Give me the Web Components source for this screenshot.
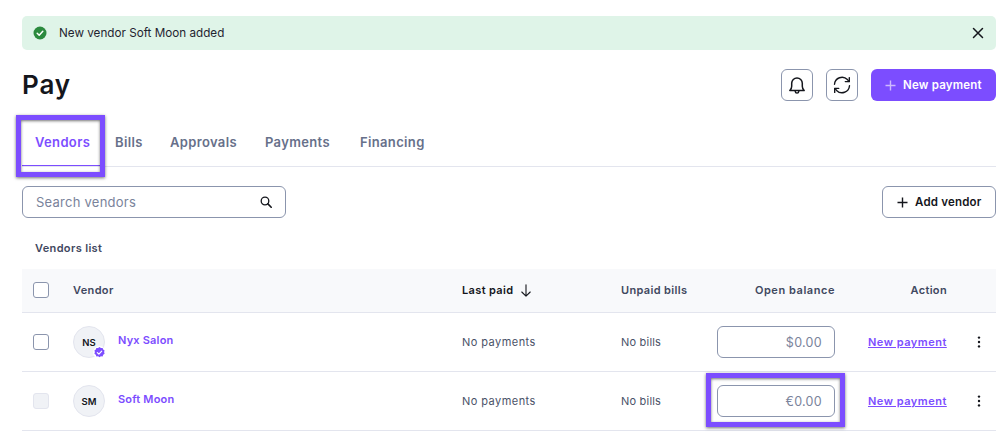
<!DOCTYPE html>
<html lang="en">
<head>
<meta charset="utf-8">
<title>Pay</title>
<style>
  html, body { margin: 0; padding: 0; background: #fff; overflow: hidden; }
  body { font-family: Inter, "Liberation Sans", sans-serif; color: #14161c; width: 996px; height: 432px; }
</style>
</head>
<body>
<pay-page></pay-page>
<script>
const ICONS = {
    check: `<svg width="14" height="14" viewBox="0 0 14 14"><circle cx="7" cy="7" r="6.5" fill="#2b8a3e"/><path d="M4.2 7.2l2 2 3.6-3.9" fill="none" stroke="#fff" stroke-width="1.5" stroke-linecap="round" stroke-linejoin="round"/></svg>`,
    close: `<svg width="12" height="12" viewBox="0 0 12 12"><path d="M1.5 1.5l9 9M10.5 1.5l-9 9" stroke="#14161c" stroke-width="1.5" stroke-linecap="round"/></svg>`,
    bell: `<svg width="18" height="20" viewBox="0 0 18 20" fill="none" stroke="#14161c" stroke-width="1.5" stroke-linejoin="round"><path d="M1.8 15.5c1.3-1.2 1.9-2.4 1.9-4.3V8.2a5.3 5.3 0 0 1 10.6 0v3c0 1.9.6 3.1 1.9 4.3z"/><path d="M7.2 16.2c.1 1.2.8 1.9 1.8 1.9s1.7-.7 1.8-1.9" stroke-linecap="round"/></svg>`,
    refresh: `<svg width="18" height="18" viewBox="0 0 18 18" fill="none" stroke="#14161c" stroke-width="1.4" stroke-linecap="round" stroke-linejoin="round"><path d="M1.5 8.2A7.5 7.5 0 0 1 14.4 3.6l1.6 1.8"/><path d="M16.3 1.6V5.6h-4"/><path d="M16.5 9.8A7.5 7.5 0 0 1 3.6 14.4L2 12.6"/><path d="M1.7 16.4v-4h4"/></svg>`,
    plus: `<svg width="11" height="11" viewBox="0 0 11 11"><path d="M5.5 .5v10M.5 5.5h10" stroke="currentColor" stroke-width="1.4"/></svg>`,
    search: `<svg width="12" height="12" viewBox="0 0 12 12" fill="none" stroke="#14161c" stroke-width="1.3"><circle cx="5" cy="5" r="3.8"/><path d="M7.9 7.9l3.3 3.3" stroke-linecap="round" stroke-width="1.6"/></svg>`,
    down: `<svg width="10" height="13" viewBox="0 0 10 13" fill="none" stroke="#14161c" stroke-width="1.1" stroke-linecap="round" stroke-linejoin="round"><path d="M5 .7v11.4M.8 8l4.2 4.2L9.2 8"/></svg>`,
    kebab: `<svg width="4" height="12" viewBox="0 0 4 12" fill="#14161c"><circle cx="2" cy="1.6" r="1.2"/><circle cx="2" cy="6" r="1.2"/><circle cx="2" cy="10.4" r="1.2"/></svg>`,
    badge: `<svg width="11" height="11" viewBox="0 0 11 11"><path d="M5.5 0l1.4 1 1.7-.1.6 1.6 1.4 1-.5 1.6.5 1.700-1.400 1-.6 1.600-1.700-.1-1.400 1-1.400-1-1.700.1-.6-1.600-1.400-1 .5-1.700-.5-1.600 1.400-1 .6-1.600 1.700.1z" fill="#7c4dff"/><path d="M3.300 5.600l1.600 1.600 2.800-3" fill="none" stroke="#fff" stroke-width="1.200" stroke-linecap="round" stroke-linejoin="round"/></svg>`
};

class AlertBanner extends HTMLElement {
    connectedCallback() {
        this.attachShadow({ mode: "open" }).innerHTML = `
            <style>
                :host { display: flex; align-items: center; height: 34px; background: #dff4e8; border-radius: 5px; padding: 0 12px 0 11px; font-size: 11.7px; color: #1f2430; }
                span { margin-left: 12px; flex: 1; }
                svg { display: block; }
            </style>
            ${ICONS.check}<span><slot></slot></span>${ICONS.close}
        `;
    }
}

class IconButton extends HTMLElement {
    connectedCallback() {
        const icon = this.getAttribute("icon");
        this.attachShadow({ mode: "open" }).innerHTML = `
            <style>
                :host { display: flex; align-items: center; justify-content: center; width: 32px; height: 32px; box-sizing: border-box; border: 1px solid #8b95ad; border-radius: 6px; }
                svg { display: block; }
            </style>
            ${ICONS[icon]}
        `;
    }
}

class PayButton extends HTMLElement {
    connectedCallback() {
        this.attachShadow({ mode: "open" }).innerHTML = `
            <style>
                :host { display: flex; align-items: center; height: 32px; box-sizing: border-box; border-radius: 6px; font-size: 11.5px; font-weight: 600; letter-spacing: .2px; white-space: nowrap; }
                :host([kind="primary"]) { background: #7c4dff; color: #fff; width: 125px; padding-left: 14px; }
                :host([kind="primary"]) svg { color: #cdb9ff; }
                :host([kind="outline"]) { border: 1px solid #8b95ad; color: #14161c; width: 114px; padding-left: 14px; }
                span { margin-left: 7px; }
                svg { display: block; }
            </style>
            ${ICONS.plus}<span><slot></slot></span>
        `;
    }
}

class PageTabs extends HTMLElement {
    connectedCallback() {
        this.attachShadow({ mode: "open" }).innerHTML = `
            <style>
                :host { display: flex; height: 50px; margin-top: 15px; border-bottom: 1px solid #e3e5ee; font-size: 13px; font-weight: 600; letter-spacing: .35px; color: #67708a; }
                div { position: relative; height: 50px; box-sizing: border-box; padding: 0 13px; line-height: 53px; white-space: nowrap; }
                .on { color: #7c4dff; width: 80px; border-bottom: 1px solid #7c4dff; }
                .b { width: 55px; }
                .c { width: 95px; }
                .d { width: 95px; }
                .hl { position: absolute; left: -6px; top: -1px; width: 89px; height: 62px; padding: 0; border: 5px solid #7c4dff; box-shadow: 0 1px 3px rgba(0,0,0,.55), inset 0 1px 3px rgba(0,0,0,.55); }
            </style>
            <div class="on">Vendors<div class="hl"></div></div>
            <div class="b">Bills</div>
            <div class="c">Approvals</div>
            <div class="d">Payments</div>
            <div>Financing</div>
        `;
    }
}

class SearchBox extends HTMLElement {
    connectedCallback() {
        this.attachShadow({ mode: "open" }).innerHTML = `
            <style>
                :host { display: flex; align-items: center; justify-content: space-between; width: 264px; height: 32px; box-sizing: border-box; border: 1px solid #8b95ad; border-radius: 6px; padding: 0 13px; font-size: 13px; letter-spacing: .25px; color: #7a839b; }
                svg { display: block; }
            </style>
            <span><slot></slot></span>${ICONS.search}
        `;
    }
}

const ROW_COLUMNS = "51px 389px 159px 96px 118px 33px 79px 1fr";

class VendorHead extends HTMLElement {
    connectedCallback() {
        this.attachShadow({ mode: "open" }).innerHTML = `
            <style>
                :host { display: grid; grid-template-columns: ${ROW_COLUMNS}; align-items: center; height: 42px; padding-bottom: 1px; background: #f8f9fb; border-bottom: 1px solid #e3e5ee; font-size: 11px; font-weight: 600; letter-spacing: .35px; color: #3f4860; }
                .box { width: 16px; height: 16px; box-sizing: border-box; margin-left: 11px; border: 1px solid #8b95ad; border-radius: 3px; background: #fff; }
                .sort { display: flex; align-items: center; gap: 8px; color: #14161c; }
                .right { text-align: right; letter-spacing: .55px; }
                .act { text-align: right; }
                svg { display: block; }
            </style>
            <div class="box"></div>
            <div>Vendor</div>
            <div class="sort">Last paid ${ICONS.down}</div>
            <div>Unpaid bills</div>
            <div class="right">Open balance</div>
            <div></div>
            <div class="act">Action</div>
            <div></div>
        `;
    }
}

class VendorRow extends HTMLElement {
    connectedCallback() {
        const initials = this.getAttribute("initials");
        const name = this.getAttribute("name");
        const amount = this.getAttribute("amount");
        const off = this.hasAttribute("disabled");
        const verified = this.hasAttribute("verified");
        const mark = this.hasAttribute("highlight");
        this.attachShadow({ mode: "open" }).innerHTML = `
            <style>
                :host { display: grid; grid-template-columns: ${ROW_COLUMNS}; align-items: center; height: 59px; box-sizing: border-box; border-bottom: 1px solid #e3e5ee; font-size: 11px; letter-spacing: .45px; color: #4a5268; }
                .box { width: 16px; height: 16px; box-sizing: border-box; margin-left: 11px; border: 1px solid #8b95ad; border-radius: 3px; background: #fff; }
                .box.off { background: #f0f2f6; border-color: #e3e5ee; }
                .vendor { display: flex; align-items: center; gap: 13px; }
                .avatar { position: relative; display: flex; align-items: center; justify-content: center; width: 32px; height: 32px; box-sizing: border-box; border: 1px solid #e3e5ee; border-radius: 50%; background: #f0f2f6; font-size: 9.5px; font-weight: 600; letter-spacing: 0; color: #14161c; }
                .badge { position: absolute; right: -2px; bottom: -2px; width: 13px; height: 13px; display: flex; align-items: center; justify-content: center; border-radius: 50%; background: #fff; }
                .name { font-weight: 600; letter-spacing: .2px; color: #7c4dff; margin-top: -4px; }
                .amount { position: relative; display: flex; align-items: center; justify-content: flex-end; height: 32px; box-sizing: border-box; border: 1px solid #8b95ad; border-radius: 6px; padding-right: 12px; font-size: 12.5px; letter-spacing: .3px; color: #7a839b; }
                .hl { position: absolute; left: -12px; top: -13px; width: 129px; height: 44px; border: 5px solid #7c4dff; box-shadow: 0 1px 3px rgba(0,0,0,.55), inset 0 1px 3px rgba(0,0,0,.55); }
                a { font-weight: 600; color: #7c4dff; text-decoration: underline; white-space: nowrap; font-size: 11px; letter-spacing: .5px; }
                .more { display: flex; justify-content: flex-end; padding-right: 15px; }
                .bills { letter-spacing: .2px; }
                svg { display: block; }
            </style>
            <div class="box ${off ? "off" : ""}"></div>
            <div class="vendor">
                <div class="avatar">${initials}${verified ? `<div class="badge">${ICONS.badge}</div>` : ""}</div>
                <div class="name">${name}</div>
            </div>
            <div>No payments</div>
            <div class="bills">No bills</div>
            <div class="amount">${amount}${mark ? `<div class="hl"></div>` : ""}</div>
            <div></div>
            <a>New payment</a>
            <div class="more">${ICONS.kebab}</div>
        `;
    }
}

class PayPage extends HTMLElement {
    connectedCallback() {
        this.attachShadow({ mode: "open" }).innerHTML = `
            <style>
                :host { display: block; padding: 16px 0 0 22px; }
                header { display: flex; align-items: center; justify-content: space-between; height: 32px; margin-top: 19px; }
                h1 { margin: 0; font-size: 26px; font-weight: 600; letter-spacing: .9px; line-height: 34px; }
                .actions { display: flex; gap: 13px; }
                .tools { display: flex; justify-content: space-between; margin-top: 19px; }
                .label { height: 51px; line-height: 60px; padding-left: 13px; font-size: 11px; font-weight: 600; letter-spacing: .35px; color: #3f4860; }
            </style>
            <alert-banner>New vendor Soft Moon added</alert-banner>
            <header>
                <h1>Pay</h1>
                <div class="actions">
                    <icon-button icon="bell"></icon-button>
                    <icon-button icon="refresh"></icon-button>
                    <pay-button kind="primary">New payment</pay-button>
                </div>
            </header>
            <page-tabs></page-tabs>
            <div class="tools">
                <search-box>Search vendors</search-box>
                <pay-button kind="outline">Add vendor</pay-button>
            </div>
            <div class="label">Vendors list</div>
            <vendor-head></vendor-head>
            <vendor-row initials="NS" name="Nyx Salon" amount="$0.00" verified></vendor-row>
            <vendor-row initials="SM" name="Soft Moon" amount="€0.00" disabled highlight></vendor-row>
        `;
    }
}

customElements.define("alert-banner", AlertBanner);
customElements.define("icon-button", IconButton);
customElements.define("pay-button", PayButton);
customElements.define("page-tabs", PageTabs);
customElements.define("search-box", SearchBox);
customElements.define("vendor-head", VendorHead);
customElements.define("vendor-row", VendorRow);
customElements.define("pay-page", PayPage);
</script>
</body>
</html>
